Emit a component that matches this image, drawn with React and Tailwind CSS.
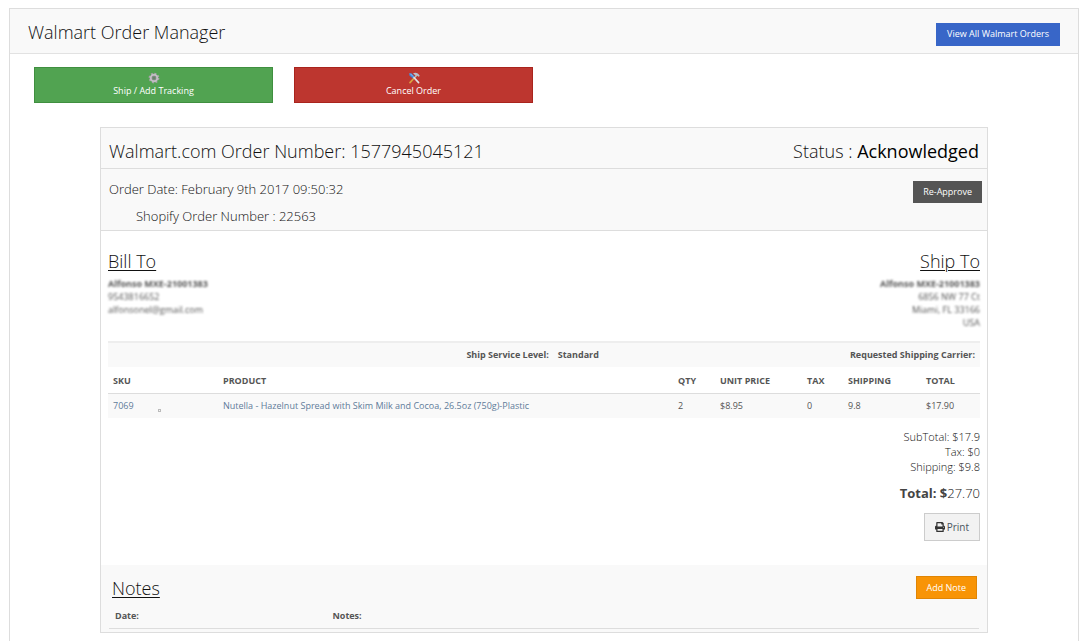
import { FaPrint } from 'react-icons/fa'

const actions = [
  { label: 'Ship / Add Tracking', icon: GearIcon, className: 'bg-[#51a351] border-[#3f8f3f]' },
  { label: 'Cancel Order', icon: ToolsIcon, className: 'bg-[#bd362f] border-[#a9241d]' },
]

const items = [
  {
    sku: '7069',
    product: 'Nutella - Hazelnut Spread with Skim Milk and Cocoa, 26.5oz (750g)-Plastic',
    qty: 2,
    price: '$8.95',
    tax: 0,
    shipping: '9.8',
    total: '$17.90',
  },
]

const billTo = ['9543816652', 'alfonsonel@gmail.com']
const shipTo = ['6856 NW 77 Ct', 'Miami, FL 33166', 'USA']

function GearIcon() {
  return (
    <svg viewBox="0 0 12 12" className="w-3 h-3" aria-hidden="true">
      <circle cx="6" cy="6" r="4.6" fill="none" stroke="#a9a4ab" strokeWidth="1.6" strokeDasharray="1.9 1.7" />
      <circle cx="6" cy="6" r="3.2" fill="none" stroke="#c2bdc4" strokeWidth="2.2" />
      <circle cx="6" cy="6" r="1.9" fill="#67856a" stroke="#8b868d" strokeWidth="0.8" />
    </svg>
  )
}

function ToolsIcon() {
  return (
    <svg viewBox="0 0 12 12" className="w-3 h-3" aria-hidden="true">
      <path d="M6 6.2 L2 10.6" stroke="#d9a441" strokeWidth="1.7" strokeLinecap="round" />
      <path d="M5.6 6.6 L8.6 3.4" stroke="#c9b79a" strokeWidth="1.5" />
      <path d="M5 1.4 C7.6 0.2 10.2 1 11.8 4 L10.4 4.8 C9.6 3.6 8.8 3.6 8.2 4.2 L6.6 2.8 Z" fill="#b9bfc9" />
      <path d="M1 1.6 L3.4 1.2 L6.8 4.8 L5 6.6 L1.6 3.8 Z" fill="#3f86d8" />
      <path d="M2.2 1.6 L5.2 4.6" stroke="#a8cdf5" strokeWidth="0.8" />
      <path d="M6 5.6 L10.6 10.6" stroke="#dfe2e6" strokeWidth="1.6" strokeLinecap="round" />
    </svg>
  )
}

function Address({ title, name, lines, right }) {
  return (
    <div className={right ? 'text-right' : ''}>
      <h3 className="text-[18px] leading-6 font-light text-[#111111] underline underline-offset-2 decoration-1">{title}</h3>
      <address className="mt-1 not-italic text-[9px] leading-[13px] blur-[1px]">
        <strong className="block">{name}</strong>
        {lines.map((line) => (
          <span key={line} className="block">{line}</span>
        ))}
      </address>
    </div>
  )
}

function ItemsTable() {
  return (
    <table className="w-full table-fixed text-left text-[9px] leading-4">
      <colgroup>
        <col className="w-[110px]" />
        <col />
        <col className="w-[42px]" />
        <col className="w-[87px]" />
        <col className="w-[41px]" />
        <col className="w-[78px]" />
        <col className="w-[59px]" />
      </colgroup>
      <thead>
        <tr className="border-b border-[#dddddd] uppercase">
          <th className="px-[5px] pt-[6px] pb-1">SKU</th>
          <th className="px-[5px] pt-[6px] pb-1">Product</th>
          <th className="px-[5px] pt-[6px] pb-1">Qty</th>
          <th className="px-[5px] pt-[6px] pb-1">Unit Price</th>
          <th className="px-[5px] pt-[6px] pb-1">Tax</th>
          <th className="px-[5px] pt-[6px] pb-1">Shipping</th>
          <th className="px-[5px] pt-[6px] pb-1">Total</th>
        </tr>
      </thead>
      <tbody>
        {items.map((item) => (
          <tr key={item.sku} className="bg-[#f9f9f9]">
            <td className="px-[5px] py-1">
              <div className="flex items-end gap-6">
                <a href="#" className="text-[#5f7c99]">{item.sku}</a>
                <span className="mb-[2px] w-[3px] h-[3px] border border-[#bbbbbb]" />
              </div>
            </td>
            <td className="px-[5px] py-1"><a href="#" className="text-[#5f7c99]">{item.product}</a></td>
            <td className="px-[5px] py-1">{item.qty}</td>
            <td className="px-[5px] py-1">{item.price}</td>
            <td className="px-[5px] py-1">{item.tax}</td>
            <td className="px-[5px] py-1">{item.shipping}</td>
            <td className="px-[5px] py-1">{item.total}</td>
          </tr>
        ))}
      </tbody>
    </table>
  )
}

export default function App() {
  return (
    <div className="min-h-screen flex flex-col bg-white pt-2 pl-[9px] pr-3 font-['Open_Sans',sans-serif] text-[#555555]">
      <div className="flex-1 border border-b-0 border-[#dddddd]">
        <header className="flex items-center justify-between h-[45px] pt-[2px] px-[18px] bg-[#f9f9f9] border-b border-[#e2e2e2]">
          <h1 className="text-[18px] leading-6 font-light text-[#111111]">Walmart Order Manager</h1>
          <button className="h-[23px] px-[11px] mt-1 bg-[#3866c8] text-white text-[9px]">View All Walmart Orders</button>
        </header>

        <div className="flex gap-[21px] pt-[13px] pl-6">
          {actions.map(({ label, icon: Icon, className }) => (
            <button
              key={label}
              className={`flex flex-col items-center justify-center w-[239px] h-9 border text-white text-[9px] leading-[14px] ${className}`}
            >
              <Icon />
              <span>{label}</span>
            </button>
          ))}
        </div>

        <main className="mt-6 mx-[90px] mb-2 border border-[#dddddd]">
          <div className="flex items-center justify-between h-[41px] pt-[6px] px-2 bg-[#f9f9f9] border-b border-[#dddddd] text-[18px] leading-6 font-light text-[#111111]">
            <h2>Walmart.com Order Number: 1577945045121</h2>
            <p>Status : <span className="font-normal text-black">Acknowledged</span></p>
          </div>

          <div className="flex items-start justify-between h-[62px] pl-2 pr-[5px] bg-[#f9f9f9] border-b border-[#dddddd] text-[13px]">
            <div className="pt-[7px] leading-[27px] font-light text-[#111111]">
              <p>Order Date: February 9th 2017 09:50:32</p>
              <p className="pl-[27px]">Shopify Order Number : 22563</p>
            </div>
            <button className="h-[22px] mt-3 px-[10px] bg-[#555555] text-white text-[9px]">Re-Approve</button>
          </div>

          <section className="pt-[18px] pb-6 px-[7px]">
            <div className="flex justify-between h-[92px]">
              <Address title="Bill To" name="Alfonso MXE-21001383" lines={billTo} />
              <Address title="Ship To" name="Alfonso MXE-21001383" lines={shipTo} right />
            </div>

            <div className="grid grid-cols-[51%_auto_auto] h-[26px] items-center bg-[#f9f9f9] border-t-2 border-[#eeeeee] text-[9px] font-bold">
              <span className="pr-1 text-right">Ship Service Level:</span>
              <span className="pl-[5px]">Standard</span>
              <span className="pr-[5px] text-right">Requested Shipping Carrier:</span>
            </div>
            <ItemsTable />

            <div className="flex flex-col items-end pt-[11px] text-[11px] leading-[15px] font-light text-[#111111]">
              <p>SubTotal: $17.9</p>
              <p>Tax: $0</p>
              <p>Shipping: $9.8</p>
              <p className="mt-3 text-[13px]"><strong className="font-bold text-[#444444]">Total: $</strong>27.70</p>
              <button className="flex items-center gap-[2px] h-7 mt-3 px-[10px] bg-[#f2f2f2] border border-[#cccccc] font-normal text-[10px] text-[#4a5560]">
                <FaPrint className="text-[#333333]" />
                Print
              </button>
            </div>
          </section>

          <section className="pt-[11px] pb-[3px] px-2 bg-[#f9f9f9]">
            <div className="flex items-start justify-between pl-[3px] pr-[2px]">
              <h3 className="text-[18px] leading-6 font-light text-[#111111] underline underline-offset-2 decoration-1">Notes</h3>
              <button className="h-[23px] px-[10px] bg-[#f89406] border border-[#e08505] text-white text-[9px]">Add Note</button>
            </div>
            <table className="w-full table-fixed mt-2 text-left text-[9px] leading-4">
              <thead>
                <tr className="border-b border-[#dddddd]">
                  <th className="w-1/4 px-[6px] pb-1">Date:</th>
                  <th className="px-[6px] pb-1">Notes:</th>
                </tr>
              </thead>
            </table>
          </section>
        </main>
      </div>
    </div>
  )
}
